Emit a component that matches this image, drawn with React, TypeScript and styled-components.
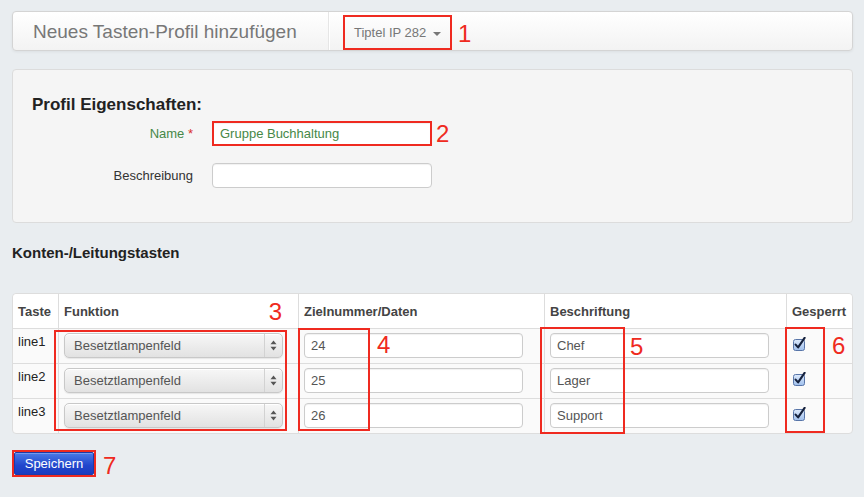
import React from 'react';
import styled, { createGlobalStyle } from 'styled-components';

const GlobalStyle = createGlobalStyle`
  html, body {
    margin: 0;
    padding: 0;
    background: #e9edf0;
  }
  body {
    font-family: "Liberation Sans", Arial, Helvetica, sans-serif;
    font-size: 13px;
    color: #333;
  }
`;

const RED = '#ef2a20';

const rows = [
  { key: 'line1', target: '24', label: 'Chef' },
  { key: 'line2', target: '25', label: 'Lager' },
  { key: 'line3', target: '26', label: 'Support' },
];

const columns = [
  { title: 'Taste', w: 45 },
  { title: 'Funktion', w: 240 },
  { title: 'Zielnummer/Daten', w: 246 },
  { title: 'Beschriftung', w: 242 },
  { title: 'Gesperrt', w: 66 },
];

const Page = styled.div`
  padding: 11px 11px 20px 12px;
  width: 841px;
`;

const HeaderBar = styled.div`
  display: flex;
  align-items: stretch;
  height: 38px;
  background: linear-gradient(#ffffff, #f3f3f3);
  border: 1px solid #d4d4d4;
  border-radius: 4px;
  box-shadow: 0 1px 3px rgba(0, 0, 0, 0.06);
`;

const Title = styled.div`
  display: flex;
  align-items: center;
  width: 295px;
  padding: 1px 0 0 20px;
  font-size: 19px;
  color: #777;
  border-right: 1px solid #e6e6e6;
  box-shadow: 1px 0 0 #fff;
`;

const NavArea = styled.div`
  display: flex;
  align-items: flex-end;
  padding-left: 14px;
`;

const DeviceMenu = styled.div`
  position: relative;
  display: flex;
  align-items: center;
  gap: 7px;
  height: 31px;
  padding: 0 9px;
  border: 2px solid ${RED};
  font-size: 13px;
  color: #777;
`;

const Caret = styled.span`
  width: 0;
  height: 0;
  margin-top: 2px;
  border-left: 4px solid transparent;
  border-right: 4px solid transparent;
  border-top: 4px solid #777;
`;

const Num = styled.span<{ $left?: number; $top?: number; $right?: number; $bottom?: number }>`
  position: absolute;
  font-size: 24px;
  line-height: 24px;
  color: ${RED};
  ${p => (p.$left !== undefined ? `left: ${p.$left}px;` : '')}
  ${p => (p.$right !== undefined ? `right: ${p.$right}px;` : '')}
  ${p => (p.$top !== undefined ? `top: ${p.$top}px;` : '')}
  ${p => (p.$bottom !== undefined ? `bottom: ${p.$bottom}px;` : '')}
`;

const Panel = styled.div`
  margin-top: 18px;
  background: #f5f5f5;
  border: 1px solid #dcdcdc;
  border-radius: 4px;
  padding: 25px 20px 34px;
`;

const PanelTitle = styled.h3`
  margin: 0 0 6px -1px;
  font-size: 17px;
  line-height: 20px;
  font-weight: bold;
  color: #222;
`;

const FormRow = styled.div`
  display: flex;
  align-items: center;
  gap: 19px;
  & + & {
    margin-top: 17px;
  }
`;

const Label = styled.label<{ $ok?: boolean }>`
  width: 160px;
  text-align: right;
  color: ${p => (p.$ok ? '#468847' : '#333')};
`;

const Star = styled.span`
  color: #d9302c;
`;

const FieldWrap = styled.div`
  position: relative;
`;

const TextInput = styled.input<{ $ok?: boolean; $marked?: boolean; $w?: number }>`
  box-sizing: border-box;
  display: block;
  width: ${p => p.$w ?? 220}px;
  height: 25px;
  padding: 0 6px;
  font-family: inherit;
  font-size: 13px;
  color: ${p => (p.$ok ? '#468847' : '#555')};
  background: #fff;
  border: ${p => (p.$marked ? `2px solid ${RED}` : '1px solid #cccccc')};
  border-radius: ${p => (p.$marked ? '0' : '4px')};
  box-shadow: inset 0 1px 1px rgba(0, 0, 0, 0.06);
  outline: none;
`;

const SectionTitle = styled.h4`
  margin: 20px 0 30px;
  font-size: 15px;
  line-height: 20px;
  font-weight: bold;
  color: #222;
`;

const TableWrap = styled.div`
  position: relative;
`;

const Table = styled.table`
  width: 100%;
  border-collapse: separate;
  border-spacing: 0;
  border: 1px solid #dddddd;
  border-radius: 4px;
  background: #fafafa;
  table-layout: fixed;
`;

const Col = styled.col<{ $w: number }>`
  width: ${p => p.$w}px;
`;

const Th = styled.th`
  height: 34px;
  padding: 0 5px;
  text-align: left;
  font-weight: bold;
  color: #444;
  background: #fff;
  border-bottom: 1px solid #dddddd;
  & + & {
    border-left: 1px solid #dddddd;
  }
  &:first-child {
    border-top-left-radius: 4px;
  }
  &:last-child {
    border-top-right-radius: 4px;
  }
`;

const Td = styled.td`
  padding: 4px 5px 5px;
  vertical-align: top;
  line-height: 16px;
  color: #222;
  tr:not(:last-child) > & {
    border-bottom: 1px solid #dddddd;
  }
  & + & {
    border-left: 1px solid #dddddd;
  }
`;

const LineName = styled.div`
  padding-top: 1px;
`;

const Select = styled.div`
  box-sizing: border-box;
  display: flex;
  align-items: center;
  width: 219px;
  height: 25px;
  border: 1px solid #c8c8c8;
  border-radius: 5px;
  background: linear-gradient(#f7f7f7, #e2e2e2);
  box-shadow: inset 0 1px 0 #fff, 0 1px 1px rgba(0, 0, 0, 0.08);
  color: #555;
`;

const SelectText = styled.span`
  flex: 1;
  padding-left: 9px;
`;

const SelectArrows = styled.span`
  display: flex;
  align-items: center;
  justify-content: center;
  width: 17px;
  height: 100%;
  border-left: 1px solid #d2d2d2;
`;

const CheckCell = styled.div`
  padding: 4px 0 0 1px;
  line-height: 0;
`;

const Marker = styled.div<{ $x: number; $y: number; $w: number; $h: number }>`
  position: absolute;
  left: ${p => p.$x}px;
  top: ${p => p.$y}px;
  width: ${p => p.$w}px;
  height: ${p => p.$h}px;
  box-sizing: border-box;
  border: 2px solid ${RED};
  pointer-events: none;
`;

const Footer = styled.div`
  position: relative;
  display: inline-block;
  margin-top: 16px;
  border: 2px solid ${RED};
`;

const SaveButton = styled.button`
  display: block;
  width: 80px;
  height: 23px;
  padding: 0;
  border: 1px solid #1c3aa8;
  border-radius: 2px;
  background: linear-gradient(#4a7ae6, #2146cc 60%, #1b3cbf);
  color: #fff;
  font-family: inherit;
  font-size: 13px;
  box-shadow: inset 0 1px 0 rgba(255, 255, 255, 0.25);
`;

const Arrows = () => (
  <svg width="7" height="11" viewBox="0 0 7 11">
    <path d="M3.5 0.5 L6.5 4.3 H0.5 Z" fill="#555" />
    <path d="M3.5 10.5 L6.5 6.7 H0.5 Z" fill="#555" />
  </svg>
);

const CheckBox = () => (
  <svg width="14" height="14" viewBox="0 0 14 14">
    <defs>
      <linearGradient id="cbg" x1="0" y1="0" x2="0" y2="1">
        <stop offset="0" stopColor="#dce9fb" />
        <stop offset="1" stopColor="#9fbfec" />
      </linearGradient>
    </defs>
    <rect x="0.5" y="2.5" width="11" height="11" rx="2" fill="url(#cbg)" stroke="#5875a8" />
    <path d="M2.6 7.6 L5.1 10.4 L11.6 0.8" fill="none" stroke="#15213d" strokeWidth="2.1" strokeLinecap="round" strokeLinejoin="round" />
  </svg>
);

export default function App() {
  return (
    <Page>
      <GlobalStyle />
      <HeaderBar>
        <Title>Neues Tasten-Profil hinzufügen</Title>
        <NavArea>
          <DeviceMenu>
            Tiptel IP 282 <Caret />
            <Num $left={113} $top={5}>1</Num>
          </DeviceMenu>
        </NavArea>
      </HeaderBar>

      <Panel>
        <PanelTitle>Profil Eigenschaften:</PanelTitle>
        <FormRow>
          <Label $ok>
            Name <Star>*</Star>
          </Label>
          <FieldWrap>
            <TextInput $ok $marked defaultValue="Gruppe Buchhaltung" />
            <Num $left={224} $top={1}>2</Num>
          </FieldWrap>
        </FormRow>
        <FormRow>
          <Label>Beschreibung</Label>
          <TextInput />
        </FormRow>
      </Panel>

      <SectionTitle>Konten-/Leitungstasten</SectionTitle>

      <TableWrap>
        <Table>
          <colgroup>
            {columns.map(c => (
              <Col key={c.title} $w={c.w} />
            ))}
          </colgroup>
          <thead>
            <tr>
              {columns.map(c => (
                <Th key={c.title}>{c.title}</Th>
              ))}
            </tr>
          </thead>
          <tbody>
            {rows.map(r => (
              <tr key={r.key}>
                <Td>
                  <LineName>{r.key}</LineName>
                </Td>
                <Td>
                  <Select>
                    <SelectText>Besetztlampenfeld</SelectText>
                    <SelectArrows>
                      <Arrows />
                    </SelectArrows>
                  </Select>
                </Td>
                <Td>
                  <TextInput $w={219} defaultValue={r.target} />
                </Td>
                <Td>
                  <TextInput $w={219} defaultValue={r.label} />
                </Td>
                <Td>
                  <CheckCell>
                    <CheckBox />
                  </CheckCell>
                </Td>
              </tr>
            ))}
          </tbody>
        </Table>

        <Marker $x={42} $y={37} $w={233} $h={101}>
          <Num $right={3} $bottom={105}>3</Num>
        </Marker>
        <Marker $x={286} $y={35} $w={72} $h={103}>
          <Num $left={77} $top={3}>4</Num>
        </Marker>
        <Marker $x={528} $y={34} $w={85} $h={107}>
          <Num $left={88} $top={6}>5</Num>
        </Marker>
        <Marker $x={773} $y={34} $w={40} $h={106}>
          <Num $left={45} $top={5}>6</Num>
        </Marker>
      </TableWrap>

      <Footer>
        <SaveButton>Speichern</SaveButton>
        <Num $left={89} $top={2}>7</Num>
      </Footer>
    </Page>
  );
}
